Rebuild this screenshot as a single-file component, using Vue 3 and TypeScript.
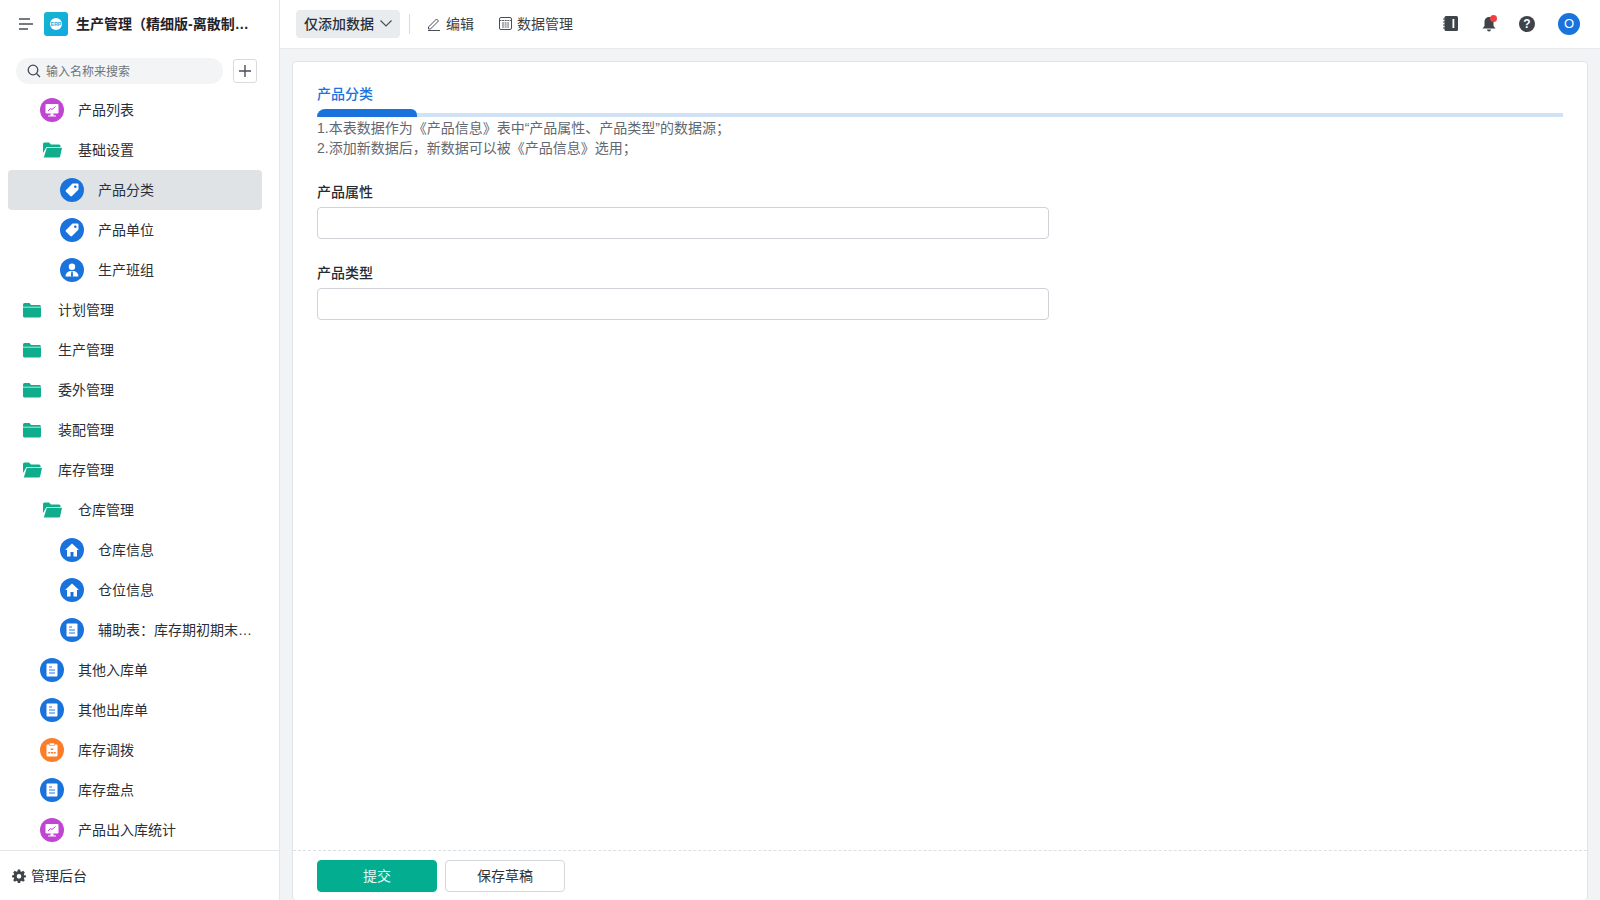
<template>
  <div class="app">
    <aside class="sidebar">
      <div class="brand">
        <svg class="menu-icon" viewBox="0 0 14 12" width="14" height="12">
          <path d="M0 1h11M0 6h14M0 11h9" stroke="#4a4f57" stroke-width="1.5" fill="none" />
        </svg>
        <span class="logo"><span class="logo-dot">ERP</span></span>
        <span class="brand-name">生产管理（精细版-离散制造）</span>
      </div>

      <div class="search-row">
        <div class="search">
          <svg viewBox="0 0 14 14" width="14" height="14">
            <circle cx="6" cy="6" r="4.8" stroke="#444a52" stroke-width="1.3" fill="none" />
            <path d="M9.5 9.5L13 13" stroke="#444a52" stroke-width="1.3" />
          </svg>
          <span>输入名称来搜索</span>
        </div>
        <button class="add-btn" type="button">
          <svg viewBox="0 0 14 14" width="14" height="14">
            <path d="M7 1v12M1 7h12" stroke="#4a4f57" stroke-width="1.4" />
          </svg>
        </button>
      </div>

      <nav class="tree">
        <div
          v-for="item in menu"
          :key="item.name"
          class="row"
          :class="['level' + item.level, { active: item.active }]"
        >
          <svg v-if="item.icon === 'folder'" class="folder" viewBox="0 0 20 16" width="20" height="16">
            <path d="M1 2.500a1.500 1.500 0 0 1 1.500-1.500h5l1.500 2H17.500a1.500 1.500 0 0 1 1.500 1.500V14a1.500 1.500 0 0 1-1.500 1.500h-15A1.500 1.500 0 0 1 1 14z" fill="#10ad8d" />
            <path d="M1 5.200h18" stroke="#fff" stroke-width=".7" />
          </svg>
          <svg v-else-if="item.icon === 'open'" class="folder" viewBox="0 0 20 16" width="20" height="16">
            <path d="M1 2a1.500 1.500 0 0 1 1.500-1.500h4.500l2 2h8a1.500 1.500 0 0 1 1.500 1.500v1H4.500L1 11z" fill="#10ad8d" />
            <path d="M4.800 5.800H20l-1.800 8.500a1.500 1.500 0 0 1-1.500 1.200H1.800z" fill="#10ad8d" />
          </svg>
          <span v-else class="badge" :class="item.icon">
            <svg viewBox="0 0 24 24" width="24" height="24">
              <template v-if="item.icon === 'chart'">
                <rect x="5.500" y="6" width="13" height="9.500" rx="1" fill="#fff" />
                <path d="M10.500 15.500h3v2h2.500v1H8v-1h2.500z" fill="#fff" />
                <path d="M8 13l2.500-2.500 1.500 1 3.500-3" stroke="#c045d3" stroke-width="1" fill="none" />
              </template>
              <template v-else-if="item.icon === 'tag'">
                <path d="M12.500 5.500h5a1 1 0 0 1 1 1v5L12 18a1.200 1.200 0 0 1-1.700 0l-4.300-4.300a1.200 1.200 0 0 1 0-1.700z" fill="#fff" />
                <circle cx="15.300" cy="8.700" r="1.300" fill="#1a73dd" />
              </template>
              <template v-else-if="item.icon === 'person'">
                <circle cx="12" cy="8.700" r="3.200" fill="#fff" />
                <path d="M5.500 18.500c0-3.500 2.500-5.500 6.500-5.500s6.500 2 6.500 5.500z" fill="#fff" />
                <path d="M11.300 13.500h1.400l.4 5h-2.200z" fill="#1a73dd" />
              </template>
              <template v-else-if="item.icon === 'home'">
                <path d="M12 5.500l7 6.500h-2v6.500h-3.500V14h-3v4.500H7V12H5z" fill="#fff" />
              </template>
              <template v-else-if="item.icon === 'doc'">
                <rect x="6.500" y="5.500" width="11" height="13" rx="1" fill="#fff" />
                <path d="M9 9h3M9 12h6M9 15h6" stroke="#6ea6ea" stroke-width="1.300" />
              </template>
              <template v-else>
                <rect x="6.500" y="6.500" width="11" height="12" rx="1" fill="#fff" />
                <rect x="9.500" y="5" width="5" height="2.500" fill="#fff" stroke="#fb7d2a" stroke-width=".6" />
                <path d="M10.700 10.500h2.600v1.600h-2.600zM8.300 14h2v1.600h-2zM11 14h2v1.600h-2zM13.700 14h2v1.600h-2z" fill="#fb7d2a" />
              </template>
            </svg>
          </span>
          <span class="row-name">{{ item.name }}</span>
        </div>
      </nav>

      <div class="admin">
        <svg viewBox="0 0 24 24" width="14" height="14">
          <path
            fill="#3f444b"
            fill-rule="evenodd"
            d="M10 1h4l.6 3.100 1.900.8 2.700-1.800 2.800 2.800-1.800 2.700.8 1.900L24 11v3l-3 .6-.8 1.900 1.800 2.700-2.800 2.800-2.700-1.800-1.900.8L14 24h-4l-.6-3.100-1.900-.8-2.700 1.800-2.800-2.800 1.800-2.700-.8-1.900L0 14v-3l3-.6.8-1.900L2 5.800 4.800 3l2.700 1.800 1.900-.8zM12 8.500a4 4 0 1 0 0 8 4 4 0 0 0 0-8z"
          />
        </svg>
        <span>管理后台</span>
      </div>
    </aside>

    <div class="main">
      <header class="topbar">
        <div class="mode">
          <span>仅添加数据</span>
          <svg viewBox="0 0 12 7" width="12" height="7">
            <path d="M.5.500L6 6l5.500-5.500" stroke="#4a4f57" stroke-width="1.200" fill="none" />
          </svg>
        </div>
        <span class="divider"></span>
        <div class="tool edit">
          <svg viewBox="0 0 14 14" width="14" height="14">
            <path d="M1.500 10L9.500 2l2 2-8 8H1.500zM1 13.500h12" stroke="#4a4f57" stroke-width="1" fill="none" />
          </svg>
          <span>编辑</span>
        </div>
        <div class="tool data">
          <svg viewBox="0 0 13 13" width="13" height="13">
            <rect x=".5" y=".5" width="12" height="12" rx="1.500" stroke="#4a4f57" fill="none" />
            <path d="M.5 3.500h12M3 6h7M3 8h7M3 10h7" stroke="#4a4f57" stroke-width=".9" stroke-dasharray="2 .6" fill="none" />
          </svg>
          <span>数据管理</span>
        </div>

        <div class="actions">
          <svg viewBox="0 0 15 15" width="15" height="15">
            <rect x="1.500" y="0" width="13.500" height="15" rx="1.500" fill="#3f444b" />
            <path d="M0 3h2.500M0 6h2.500M0 9h2.500M0 12h2.500" stroke="#3f444b" stroke-width="1" />
            <rect x="9.500" y="3" width="1.800" height="9" fill="#fff" />
          </svg>
          <span class="bell">
            <svg viewBox="0 0 14 16" width="14" height="16">
              <path d="M7 1c3 0 4.500 2.500 4.500 5v4l2 2.500H.5L2.500 10V6C2.500 3.500 4 1 7 1z" fill="#3f444b" />
              <path d="M5 13.500h4a2 2 0 0 1-4 0z" fill="#3f444b" />
            </svg>
            <i></i>
          </span>
          <span class="help">?</span>
          <span class="avatar">O</span>
        </div>
      </header>

      <div class="content">
        <section class="card">
          <div class="form">
            <div class="tab-title">产品分类</div>
            <div class="tab-line"><span></span></div>
            <p class="note first">1.本表数据作为《产品信息》表中“产品属性、产品类型”的数据源；</p>
            <p class="note">2.添加新数据后，新数据可以被《产品信息》选用；</p>

            <div v-for="field in fields" :key="field" class="field">
              <label>{{ field }}</label>
              <input type="text" />
            </div>
          </div>

          <div class="form-footer">
            <button class="submit" type="button">提交</button>
            <button class="draft" type="button">保存草稿</button>
          </div>
        </section>
      </div>
    </div>
  </div>
</template>

<script setup lang="ts">
type MenuIcon = 'folder' | 'open' | 'chart' | 'tag' | 'person' | 'home' | 'doc' | 'clip'

interface MenuItem {
  name: string
  level: number
  icon: MenuIcon
  active?: boolean
}

const menu: MenuItem[] = [
  { name: '产品列表', level: 1, icon: 'chart' },
  { name: '基础设置', level: 1, icon: 'open' },
  { name: '产品分类', level: 2, icon: 'tag', active: true },
  { name: '产品单位', level: 2, icon: 'tag' },
  { name: '生产班组', level: 2, icon: 'person' },
  { name: '计划管理', level: 0, icon: 'folder' },
  { name: '生产管理', level: 0, icon: 'folder' },
  { name: '委外管理', level: 0, icon: 'folder' },
  { name: '装配管理', level: 0, icon: 'folder' },
  { name: '库存管理', level: 0, icon: 'open' },
  { name: '仓库管理', level: 1, icon: 'open' },
  { name: '仓库信息', level: 2, icon: 'home' },
  { name: '仓位信息', level: 2, icon: 'home' },
  { name: '辅助表：库存期初期末数据表', level: 2, icon: 'doc' },
  { name: '其他入库单', level: 1, icon: 'doc' },
  { name: '其他出库单', level: 1, icon: 'doc' },
  { name: '库存调拨', level: 1, icon: 'clip' },
  { name: '库存盘点', level: 1, icon: 'doc' },
  { name: '产品出入库统计', level: 1, icon: 'chart' },
]

const fields = ['产品属性', '产品类型']
</script>

<style>
html,
body {
  margin: 0;
  overflow: hidden;
}
</style>

<style scoped>
.app {
  display: flex;
  width: 1600px;
  height: 900px;
  overflow: hidden;
  background: #f1f3f5;
  color: #2b3038;
  font-family: "Liberation Sans", "Noto Sans CJK SC", sans-serif;
  font-size: 14px;
  line-height: 20px;
}

.sidebar {
  display: flex;
  flex-direction: column;
  flex: none;
  box-sizing: border-box;
  width: 280px;
  height: 900px;
  background: #fff;
  border-right: 1px solid #e4e7ea;
}

.brand {
  display: flex;
  align-items: center;
  flex: none;
  box-sizing: border-box;
  height: 48px;
  padding-left: 19px;
}

.logo {
  display: flex;
  align-items: center;
  justify-content: center;
  flex: none;
  width: 24px;
  height: 24px;
  margin-left: 11px;
  border-radius: 3px;
  background: linear-gradient(135deg, #17b6c9, #0fa8e6);
}

.logo-dot {
  width: 12px;
  height: 12px;
  border-radius: 50%;
  background: #fff;
  color: #1aa8d8;
  font-size: 5px;
  font-weight: 700;
  line-height: 12px;
  text-align: center;
}

.brand-name {
  width: 175px;
  margin-left: 8px;
  overflow: hidden;
  color: #1f2329;
  font-weight: 700;
  text-overflow: ellipsis;
  white-space: nowrap;
}

.search-row {
  display: flex;
  align-items: center;
  flex: none;
  box-sizing: border-box;
  height: 42px;
  padding: 10px 0 6px 16px;
}

.search {
  display: flex;
  align-items: center;
  gap: 5px;
  box-sizing: border-box;
  width: 207px;
  height: 26px;
  padding-left: 11px;
  border-radius: 13px;
  background: #f2f4f5;
  color: #6f757c;
  font-size: 12px;
  line-height: 20px;
}

.search span {
  padding-top: 1px;
}

.add-btn {
  display: flex;
  align-items: center;
  justify-content: center;
  width: 24px;
  height: 24px;
  margin-left: 10px;
  padding: 0;
  border: 1px solid #d9dcdf;
  border-radius: 3px;
  background: #fff;
}

.tree {
  flex: 1;
  min-height: 0;
  padding: 0 17px 0 8px;
  overflow: hidden;
}

.row {
  display: flex;
  align-items: center;
  box-sizing: border-box;
  height: 40px;
  border-radius: 4px;
}

.row.active {
  background: #e0e3e6;
}

.level0 {
  padding-left: 14px;
}

.level1 {
  padding-left: 32px;
}

.level2 {
  padding-left: 52px;
}

.level1 .folder {
  margin-left: 2px;
}

.folder {
  flex: none;
  margin-right: 16px;
}

.badge {
  display: flex;
  flex: none;
  width: 24px;
  height: 24px;
  margin-right: 14px;
  border-radius: 50%;
  background: #1a73dd;
}

.badge.chart {
  background: #c045d3;
}

.badge.clip {
  background: #fb7d2a;
}

.row-name {
  flex: 1;
  min-width: 0;
  overflow: hidden;
  text-overflow: ellipsis;
  white-space: nowrap;
}

.admin {
  display: flex;
  align-items: center;
  gap: 5px;
  flex: none;
  box-sizing: border-box;
  height: 50px;
  padding-left: 12px;
  border-top: 1px solid #e4e7ea;
}

.main {
  display: flex;
  flex-direction: column;
  flex: 1;
  min-width: 0;
}

.topbar {
  display: flex;
  align-items: center;
  flex: none;
  box-sizing: border-box;
  height: 49px;
  padding: 0 20px 1px 16px;
  background: #fff;
  border-bottom: 1px solid #e7e9ec;
}

.mode {
  display: flex;
  align-items: center;
  gap: 6px;
  box-sizing: border-box;
  width: 104px;
  height: 28px;
  padding-left: 8px;
  border-radius: 4px;
  background: #e9ecef;
  font-weight: 500;
}

.divider {
  width: 1px;
  height: 20px;
  margin: 0 17px 0 9px;
  background: #d9dcdf;
}

.tool {
  display: flex;
  align-items: center;
  gap: 5px;
  color: #3a3f46;
}

.tool.data {
  margin-left: 25px;
}

.actions {
  display: flex;
  align-items: center;
  margin-left: auto;
}

.bell {
  position: relative;
  display: flex;
  margin-left: 24px;
  margin-right: -1px;
}

.bell i {
  position: absolute;
  top: -1px;
  right: -1px;
  width: 7px;
  height: 7px;
  border-radius: 50%;
  background: #ee4040;
}

.help {
  width: 16px;
  height: 16px;
  margin-left: 24px;
  border-radius: 50%;
  background: #3f444b;
  color: #fff;
  font-size: 12px;
  font-weight: 700;
  line-height: 16px;
  text-align: center;
}

.avatar {
  width: 22px;
  height: 22px;
  margin-left: 23px;
  border-radius: 50%;
  background: #1a73dd;
  color: #fff;
  font-size: 13px;
  line-height: 22px;
  text-align: center;
}

.content {
  flex: 1;
  min-height: 0;
  padding: 12px 12px 0;
}

.card {
  display: flex;
  flex-direction: column;
  box-sizing: border-box;
  height: 840px;
  border: 1px solid #e1e4e7;
  border-radius: 4px;
  background: #fff;
}

.form {
  flex: 1;
  min-height: 0;
  padding: 22px 24px 0;
}

.tab-title {
  height: 20px;
  color: #1a73dd;
  font-weight: 500;
}

.tab-line {
  position: relative;
  height: 4px;
  margin-top: 9px;
  background: #d2e2f5;
}

.tab-line span {
  position: absolute;
  left: 0;
  bottom: 0;
  width: 100px;
  height: 8px;
  border-radius: 8px 6px 0 0;
  background: #1a73dd;
}

.note {
  margin: 0;
  color: #626870;
}

.note.first {
  margin-top: 1px;
}

.field {
  margin-top: 24px;
}

label {
  display: block;
  height: 20px;
  color: #262b32;
  font-weight: 500;
}

input {
  display: block;
  box-sizing: border-box;
  width: 732px;
  height: 32px;
  margin-top: 5px;
  border: 1px solid #cfd3d7;
  border-radius: 4px;
  background: #fff;
  outline: none;
}

.form-footer {
  display: flex;
  gap: 8px;
  flex: none;
  box-sizing: border-box;
  height: 50px;
  padding: 9px 24px 0;
  border-top: 1px dashed #dcdfe2;
}

.form-footer button {
  width: 120px;
  height: 32px;
  padding: 0;
  border-radius: 4px;
  font-family: inherit;
  font-size: 14px;
  line-height: 20px;
}

.submit {
  border: 1px solid #03ae90;
  background: #03ae90;
  color: #e3f8f3;
}

.draft {
  border: 1px solid #d4d7da;
  background: #fff;
  color: #2f343b;
}
</style>
